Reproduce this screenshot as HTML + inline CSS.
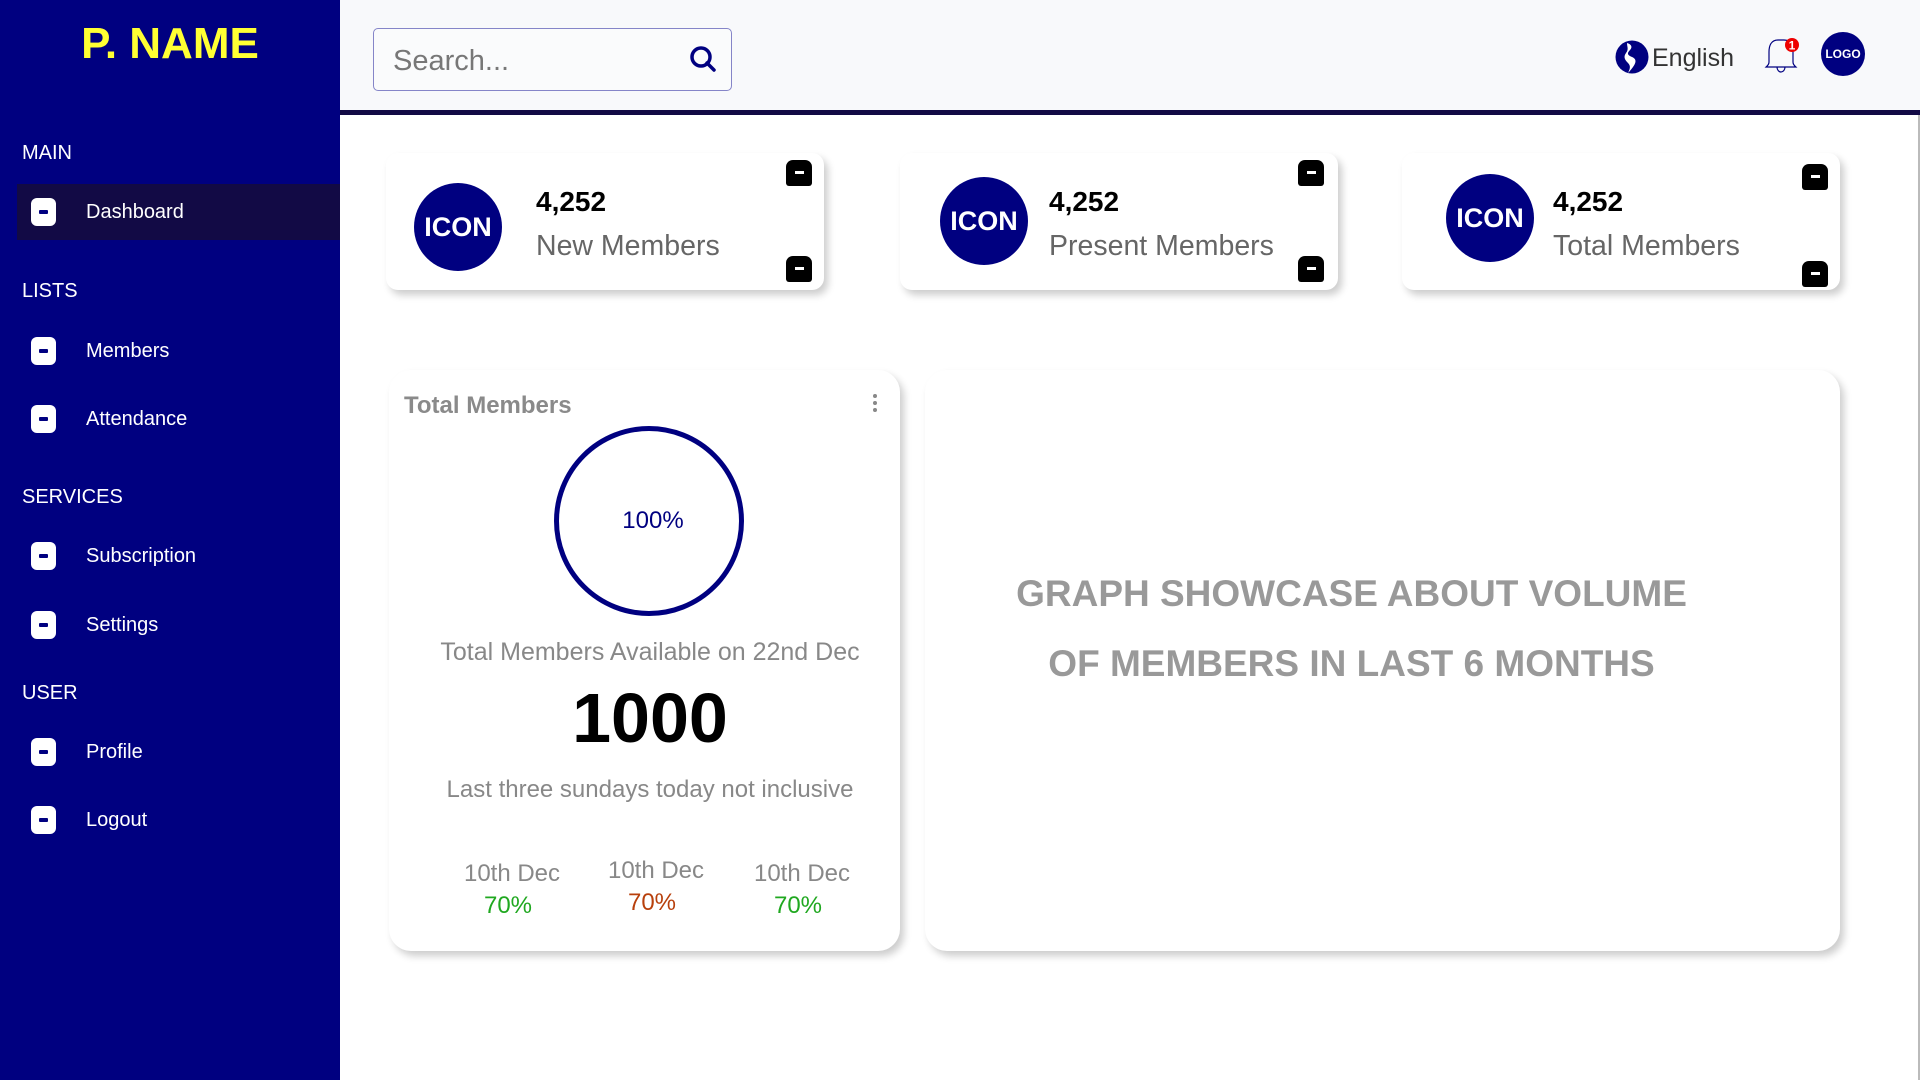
<!DOCTYPE html>
<html><head><meta charset="utf-8"><style>
*{margin:0;padding:0;box-sizing:border-box}
body{width:1920px;height:1080px;position:relative;overflow:hidden;background:#fff;font-family:"Liberation Sans",Arial,sans-serif}
.a{position:absolute}
#side{left:0;top:0;width:340px;height:1080px;background:#000080}
.sec{position:absolute;left:22px;color:#fff;font-size:20px}
.item{position:absolute;left:0;width:340px;height:56px;color:#fff;font-size:20px}
.item .ic{position:absolute;left:31px;top:14px;width:25px;height:28px;background:#fff;border-radius:6px}
.item .ic:after{content:"";position:absolute;left:8px;top:12px;width:9px;height:4px;background:#000080;border-radius:1px}
.item span{position:absolute;left:86px;top:17px}
#hdr{left:340px;top:0;width:1580px;height:115px;background:#f8f9fb;border-bottom:5px solid #120a45}
.card{position:absolute;background:#fff;border-radius:12px;box-shadow:4px 5px 8px rgba(0,0,0,.2)}
.circ{position:absolute;width:88px;height:88px;border-radius:50%;background:#000080;color:#fff;font-weight:bold;font-size:27px;text-align:center;line-height:88px}
.num{position:absolute;font-weight:bold;font-size:28px;color:#000}
.lbl{position:absolute;font-size:28.5px;color:#666}
.sq{position:absolute;width:26px;height:26px;background:#000;border-radius:7px 7px 3px 3px}
.sq:after{content:"";position:absolute;left:9px;top:11px;width:9px;height:3px;background:#fff}
.ctr{position:absolute;text-align:center;white-space:nowrap}
</style></head><body>
<div id="side" class="a">
<div class="a" style="left:0;width:340px;top:19px;text-align:center;color:#ffff33;font-weight:bold;font-size:44px">P. NAME</div>
<div class="sec" style="top:142px">MAIN</div>
<div class="item" style="top:184px;left:17px;width:323px;background:#120a45"><div class="ic" style="left:14px"></div><span style="left:69px">Dashboard</span></div>
<div class="sec" style="top:280px">LISTS</div>
<div class="item" style="top:323px"><div class="ic"></div><span>Members</span></div>
<div class="item" style="top:391px"><div class="ic"></div><span>Attendance</span></div>
<div class="sec" style="top:486px">SERVICES</div>
<div class="item" style="top:528px"><div class="ic"></div><span>Subscription</span></div>
<div class="item" style="top:597px"><div class="ic"></div><span>Settings</span></div>
<div class="sec" style="top:682px">USER</div>
<div class="item" style="top:724px"><div class="ic"></div><span>Profile</span></div>
<div class="item" style="top:792px"><div class="ic"></div><span>Logout</span></div>
</div>
<div id="hdr" class="a"></div>
<div class="a" style="left:373px;top:28px;width:359px;height:63px;border:1.5px solid #8585c8;border-radius:5px;background:#fafbfc"></div>
<div class="a" style="left:393px;top:45px;font-size:29px;color:#777">Search...</div>
<svg class="a" style="left:688px;top:44px" width="30" height="30" viewBox="0 0 30 30"><circle cx="13" cy="13" r="9" fill="none" stroke="#000080" stroke-width="3.5"/><path d="M19 19l7 7" stroke="#000080" stroke-width="3.5" stroke-linecap="round"/></svg>
<svg class="a" style="left:1615px;top:40px" width="34" height="34" viewBox="0 0 34 34"><circle cx="17" cy="17" r="16.5" fill="#000080"/><path d="M12 3c4 1 6 4 3 7s-3 5 2 7 4 6 1 10-4 5-5 6c2-4 3-7 0-10s-5-6-2-10 1-6 1-10z" fill="#fff"/></svg>
<div class="a" style="left:1652px;top:44px;font-size:25px;color:#333">English</div>
<svg class="a" style="left:1760px;top:36px" width="44" height="40" viewBox="0 0 44 40"><path d="M18 4c-7 0-9 6-9 12v10c0 3-2 4-3 5h30c-1-1-3-2-3-5V16c0-6-2-12-9-12-2 0-4 0-6 0z" fill="none" stroke="#000080" stroke-width="1.2"/><path d="M17 31c0 3 2 5 4 5s4-2 4-5" fill="none" stroke="#000080" stroke-width="1.2"/><circle cx="32" cy="9" r="7" fill="#e00"/><text x="32" y="13.5" font-size="12" font-weight="bold" fill="#fff" text-anchor="middle" font-family="Liberation Sans">1</text></svg>
<div class="a" style="left:1821px;top:32px;width:44px;height:44px;border-radius:50%;background:#000080;color:#fff;font-size:12px;font-weight:bold;text-align:center;line-height:44px">LOGO</div>
<div class="a" style="left:1918px;top:115px;width:2px;height:965px;background:#bbb"></div>

<div class="card" style="left:386px;top:153px;width:438px;height:137px"></div>
<div class="circ" style="left:414px;top:183px">ICON</div>
<div class="num" style="left:536px;top:186px">4,252</div>
<div class="lbl" style="left:536px;top:230px">New Members</div>
<div class="sq" style="left:786px;top:160px"></div><div class="sq" style="left:786px;top:256px"></div>

<div class="card" style="left:900px;top:153px;width:438px;height:137px"></div>
<div class="circ" style="left:940px;top:177px">ICON</div>
<div class="num" style="left:1049px;top:186px">4,252</div>
<div class="lbl" style="left:1049px;top:230px">Present Members</div>
<div class="sq" style="left:1298px;top:160px"></div><div class="sq" style="left:1298px;top:256px"></div>

<div class="card" style="left:1402px;top:153px;width:438px;height:137px"></div>
<div class="circ" style="left:1446px;top:174px">ICON</div>
<div class="num" style="left:1553px;top:186px">4,252</div>
<div class="lbl" style="left:1553px;top:230px">Total Members</div>
<div class="sq" style="left:1802px;top:164px"></div><div class="sq" style="left:1802px;top:261px"></div>

<div class="card" style="left:389px;top:370px;width:511px;height:581px;border-radius:22px"></div>
<div class="a" style="left:404px;top:392px;font-size:24px;font-weight:bold;color:#8a8a8a">Total Members</div>
<svg class="a" style="left:870px;top:393px" width="10" height="22"><circle cx="5" cy="3" r="2" fill="#888"/><circle cx="5" cy="10" r="2" fill="#888"/><circle cx="5" cy="17" r="2" fill="#888"/></svg>
<div class="a" style="left:554px;top:426px;width:190px;height:190px;border:5px solid #000080;border-radius:50%"></div>
<div class="ctr" style="left:554px;width:198px;top:507px;font-size:24px;color:#000080">100%</div>
<div class="ctr" style="left:389px;width:522px;top:638px;font-size:25px;color:#888">Total Members Available on 22nd Dec</div>
<div class="ctr" style="left:389px;width:522px;top:678px;font-size:70px;font-weight:bold;color:#000">1000</div>
<div class="ctr" style="left:389px;width:522px;top:776px;font-size:24px;color:#888">Last three sundays today not inclusive</div>
<div class="ctr" style="left:432px;width:160px;top:860px;font-size:24px;color:#888">10th Dec</div>
<div class="ctr" style="left:428px;width:160px;top:892px;font-size:24px;color:#20a820">70%</div>
<div class="ctr" style="left:576px;width:160px;top:857px;font-size:24px;color:#888">10th Dec</div>
<div class="ctr" style="left:572px;width:160px;top:889px;font-size:24px;color:#b8400c">70%</div>
<div class="ctr" style="left:722px;width:160px;top:860px;font-size:24px;color:#888">10th Dec</div>
<div class="ctr" style="left:718px;width:160px;top:892px;font-size:24px;color:#20a820">70%</div>

<div class="card" style="left:925px;top:370px;width:915px;height:581px;border-radius:22px"></div>
<div class="ctr" style="left:925px;width:853px;top:559px;font-size:37px;font-weight:bold;color:#999;line-height:70px">GRAPH SHOWCASE ABOUT VOLUME<br>OF MEMBERS IN LAST 6 MONTHS</div>
</body></html>
